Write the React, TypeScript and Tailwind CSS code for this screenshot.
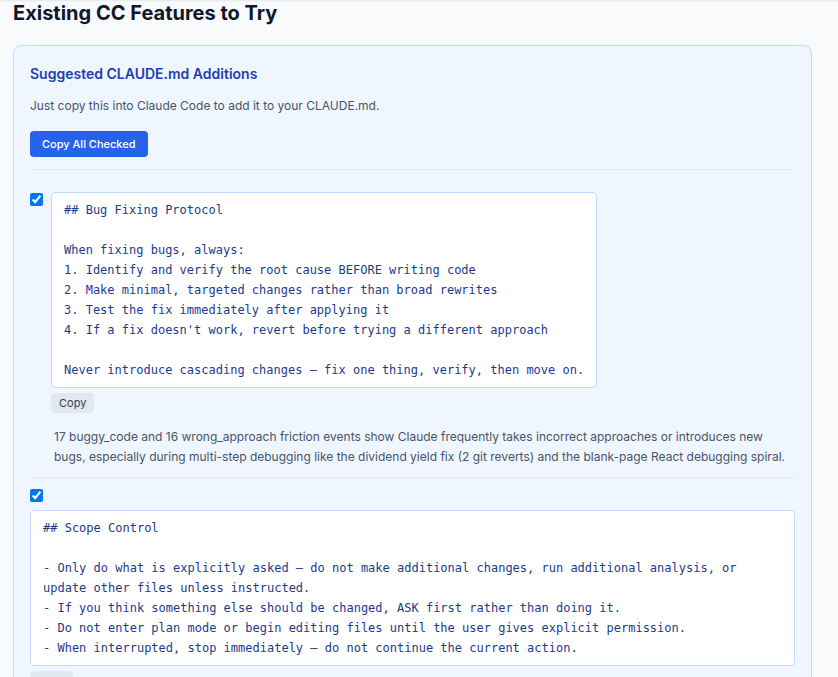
import React from 'react';

const items = [
  {
    code: `## Bug Fixing Protocol

When fixing bugs, always:
1. Identify and verify the root cause BEFORE writing code
2. Make minimal, targeted changes rather than broad rewrites
3. Test the fix immediately after applying it
4. If a fix doesn't work, revert before trying a different approach

Never introduce cascading changes — fix one thing, verify, then move on.`,
    why: '17 buggy_code and 16 wrong_approach friction events show Claude frequently takes incorrect approaches or introduces new bugs, especially during multi-step debugging like the dividend yield fix (2 git reverts) and the blank-page React debugging spiral.',
  },
  {
    code: `## Scope Control

- Only do what is explicitly asked — do not make additional changes, run additional analysis, or update other files unless instructed.
- If you think something else should be changed, ASK first rather than doing it.
- Do not enter plan mode or begin editing files until the user gives explicit permission.
- When interrupted, stop immediately — do not continue the current action.`,
    why: 'Multiple sessions show Claude doing more than asked, which the user had to interrupt.',
  },
];

const App: React.FC = () => {
  return (
    <div className="min-h-screen bg-[#f8fafc] font-['Inter',sans-serif] text-[#0f172a]">
      <div className="h-[2px] bg-gradient-to-b from-[#e5e7eb] to-[#f8fafc]"></div>
      <div className="px-[13px]">
        <h2 className="text-[20px] font-bold leading-7 -mt-[3px] text-[#0f172a]">Existing CC Features to Try</h2>

        <div className="mt-[18px] w-[799px] bg-[#eff6ff] border border-[#bfdbfe] rounded-lg p-4">
          {/* header */}
          <div className="pb-3 border-b border-[#dbeafe] mb-3">
            <h3 className="text-[14px] font-semibold leading-6 text-[#1e40af] mb-[10px]">Suggested CLAUDE.md Additions</h3>
            <p className="text-xs leading-5 text-[#475569]">Just copy this into Claude Code to add it to your CLAUDE.md.</p>
            <button className="mt-[15px] bg-[#2563eb] text-white text-[11px] font-medium leading-4 px-3 py-[5px] rounded">
              Copy All Checked
            </button>
          </div>

          {items.map((item, i) => (
            <div key={i} className="flex flex-wrap items-start gap-2 py-[10px] border-b border-[#dbeafe]">
              <input type="checkbox" defaultChecked className="w-[13px] h-[13px] mt-px" />
              <div className="max-w-full min-w-0">
                <div className="bg-white border border-[#bfdbfe] rounded px-3 py-[7px] font-['DejaVu_Sans_Mono',monospace] text-xs leading-5 text-[#1e3a8a] whitespace-pre-wrap">
                  {item.code}
                </div>
                <button className="mt-[5px] bg-[#e2e8f0] text-[#334155] text-[11px] leading-4 px-2 py-[2px] rounded">
                  Copy
                </button>
              </div>
              <p className="w-full pl-6 mt-1.5 text-xs leading-5 text-[#475569]">{item.why}</p>
            </div>
          ))}
        </div>
      </div>
    </div>
  );
};

export default App;
